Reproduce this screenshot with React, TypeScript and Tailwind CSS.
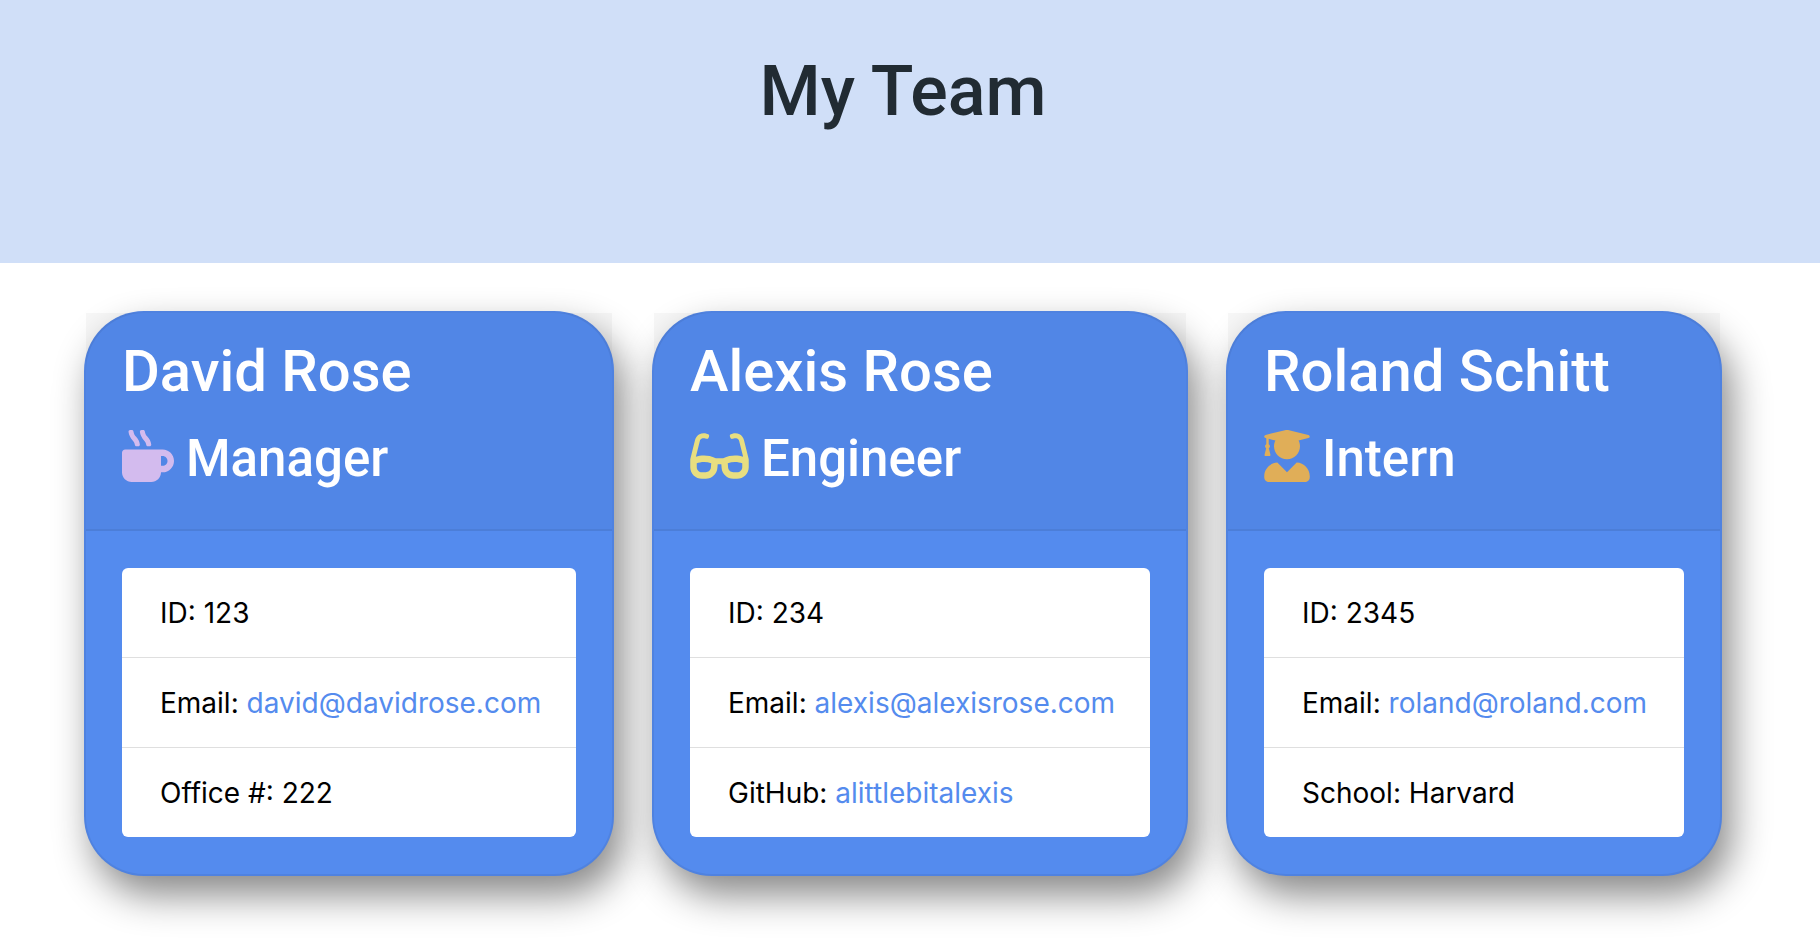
import React from 'react';
import type { IconType } from 'react-icons';
import { FaMugHot, FaGlasses, FaUserGraduate } from 'react-icons/fa';

type Detail = { label: string; value: string; href?: string };

type Member = {
  name: string;
  role: string;
  Icon: IconType;
  iconClass: string;
  widthClass: string;
  details: Detail[];
};

const team: Member[] = [
  {
    name: 'David Rose',
    role: 'Manager',
    Icon: FaMugHot,
    iconClass: 'w-[52px] text-[#d3bbee]',
    widthClass: 'w-[530px]',
    details: [
      { label: 'ID', value: '123' },
      { label: 'Email', value: 'david@davidrose.com', href: 'mailto:david@davidrose.com' },
      { label: 'Office #', value: '222' },
    ],
  },
  {
    name: 'Alexis Rose',
    role: 'Engineer',
    Icon: FaGlasses,
    iconClass: 'w-[59px] text-[#e8de80]',
    widthClass: 'w-[536px]',
    details: [
      { label: 'ID', value: '234' },
      { label: 'Email', value: 'alexis@alexisrose.com', href: 'mailto:alexis@alexisrose.com' },
      { label: 'GitHub', value: 'alittlebitalexis', href: 'https://github.com/alittlebitalexis' },
    ],
  },
  {
    name: 'Roland Schitt',
    role: 'Intern',
    Icon: FaUserGraduate,
    iconClass: 'w-[46px] text-[#e0ae58]',
    widthClass: 'w-[496px]',
    details: [
      { label: 'ID', value: '2345' },
      { label: 'Email', value: 'roland@roland.com', href: 'mailto:roland@roland.com' },
      { label: 'School', value: 'Harvard' },
    ],
  },
];

function MemberCard({ name, role, Icon, iconClass, widthClass, details }: Member) {
  return (
    <article
      className={`${widthClass} rounded-[60px] border-2 border-black/6 bg-[#548bee] shadow-[9px_19px_38px_#888888]`}
    >
      <div className="border-b-2 border-black/6 bg-black/3 px-9 pt-[22px] pb-[38px] font-['Roboto','Liberation_Sans',sans-serif] text-white">
        <h2 className="mb-5 text-[58px] leading-[72px] font-medium">{name}</h2>
        <h3 className="text-[51px] leading-[64px] font-medium">
          <Icon aria-hidden="true" className={`mr-3 inline-block h-[52px] align-[-6px] ${iconClass}`} />
          {role}
        </h3>
      </div>
      <div className="px-9 py-[37px]">
        <ul className="divide-y divide-[#dfdfdf] rounded-md bg-white">
          {details.map(({ label, value, href }) => (
            <li
              key={label}
              className="px-[38px] pt-[23px] pb-[21px] text-[28px] leading-[45px] whitespace-nowrap text-black"
            >
              {label}:{' '}
              {href ? (
                <a href={href} className="text-[#548bee] hover:underline">
                  {value}
                </a>
              ) : (
                value
              )}
            </li>
          ))}
        </ul>
      </div>
    </article>
  );
}

export default function App() {
  return (
    <div className="min-h-screen font-['Inter','Liberation_Sans',sans-serif]">
      <header className="bg-[#d0dff8] pt-[46px] pr-3.5 pb-[127px]">
        <h1 className="text-center font-['Roboto','Liberation_Sans',sans-serif] text-[70px] leading-[90px] font-medium text-[#212b33]">
          My Team
        </h1>
      </header>
      <main className="flex flex-wrap justify-center gap-[38px] pt-12 pr-3.5 pb-12">
        {team.map((member) => (
          <MemberCard key={member.name} {...member} />
        ))}
      </main>
    </div>
  );
}
